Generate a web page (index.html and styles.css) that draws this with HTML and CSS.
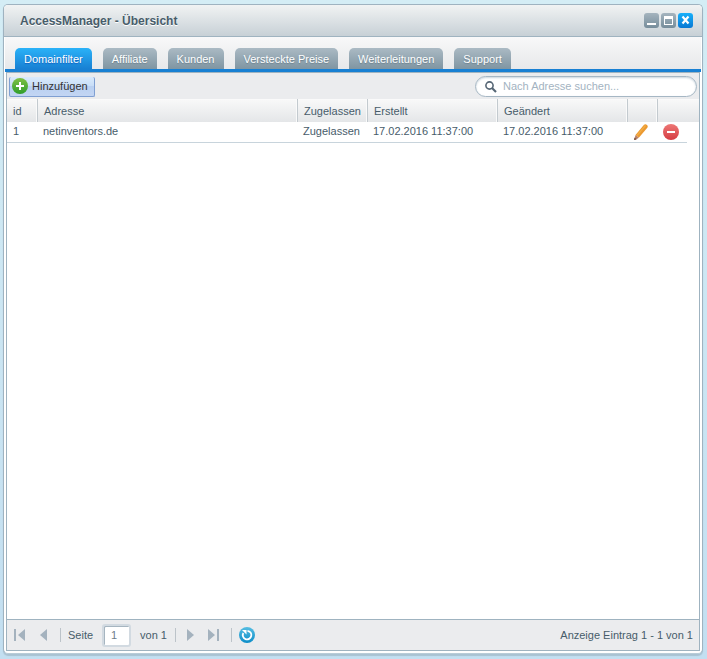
FILE: index.html
```html
<!DOCTYPE html>
<html lang="de">
<head>
<meta charset="utf-8">
<title>AccessManager - Übersicht</title>
<link rel="stylesheet" href="styles.css">
</head>
<body>
<main class="window">
  <header class="titlebar">
    <h1 class="title">AccessManager - Übersicht</h1>
    <div class="tools">
      <button class="tool" type="button" aria-label="Minimieren"><svg viewBox="0 0 15 15"><path d="M3 10h9v2H3z" fill="#fff"/></svg></button>
      <button class="tool" type="button" aria-label="Maximieren"><svg viewBox="0 0 15 15"><path fill-rule="evenodd" d="M3 3h9v9H3zM4 6v5h7V6z" fill="#fff"/></svg></button>
      <button class="tool tool-close" type="button" aria-label="Schließen"><svg viewBox="0 0 15 15"><path d="M4.500 3.500l6 7M10.500 3.500l-6 7" stroke="#fff" stroke-width="2.200"/></svg></button>
    </div>
  </header>
  <nav class="tabs">
    <button class="tab tab-active" type="button">Domainfilter</button>
    <button class="tab" type="button">Affiliate</button>
    <button class="tab" type="button">Kunden</button>
    <button class="tab" type="button">Versteckte Preise</button>
    <button class="tab" type="button">Weiterleitungen</button>
    <button class="tab" type="button">Support</button>
  </nav>
  <section class="panel">
    <div class="toolbar">
      <button class="add" type="button">
        <svg class="icon" viewBox="0 0 16 16"><defs><linearGradient id="green" x2="0" y2="1"><stop stop-color="#7fc044"/><stop offset="1" stop-color="#2f9e2c"/></linearGradient></defs><circle cx="8" cy="8" r="8" fill="url(#green)"/><path d="M7 4h2v3h3v2H9v3H7V9H4V7h3z" fill="#fff"/></svg>
        Hinzufügen
      </button>
      <label class="search">
        <svg class="lens" viewBox="0 0 12 12"><circle cx="4.500" cy="4.500" r="3.600" fill="none" stroke="#566675" stroke-width="1.600"/><path d="M7 7l4 4" stroke="#566675" stroke-width="2.200"/></svg>
        <input class="search-input" type="text" placeholder="Nach Adresse suchen..." aria-label="Nach Adresse suchen">
      </label>
    </div>
    <div class="grid">
      <table class="table">
        <colgroup><col class="c-icon"><col><col class="c-state"><col class="c-date"><col class="c-date"><col class="c-icon"><col class="c-icon"><col class="c-rest"></colgroup>
        <thead>
          <tr><th>id</th><th>Adresse</th><th>Zugelassen</th><th>Erstellt</th><th>Geändert</th><th></th><th></th><th class="rest"></th></tr>
        </thead>
        <tbody>
          <tr>
            <td>1</td><td>netinventors.de</td><td>Zugelassen</td><td>17.02.2016 11:37:00</td><td>17.02.2016 11:37:00</td>
            <td class="action"><button class="row-btn" type="button" aria-label="Bearbeiten"><svg class="icon" viewBox="0 0 16 16"><path d="M2.500 11L11 .8q1.500-1 3 .2 1.300 1.200.3 2.700L5.800 13.800z" fill="#eb9930"/><path d="M4 11.500L12.500 1.500" stroke="#f3ad45" stroke-width="1.200"/><path d="M2.500 11l3.300 2.800L2.500 16H1.200z" fill="#b98168"/><path d="M1.500 13.500L3.600 15.300 1 16z" fill="#75503f"/></svg></button></td>
            <td class="action"><button class="row-btn" type="button" aria-label="Löschen"><svg class="icon" viewBox="0 0 16 16"><defs><linearGradient id="red" x2="0" y2="1"><stop stop-color="#ee7876"/><stop offset="1" stop-color="#d53c42"/></linearGradient></defs><circle cx="8" cy="8" r="8" fill="url(#red)"/><path d="M4 7h8v2H4z" fill="#fff"/></svg></button></td>
            <td class="rest"></td>
          </tr>
        </tbody>
      </table>
    </div>
    <footer class="paging">
      <button class="page-btn" type="button" aria-label="Erste Seite"><svg class="icon" viewBox="0 0 16 16"><path d="M2 2h2v12H2zM13 2v12L6 8z" fill="#a4b2be"/></svg></button>
      <button class="page-btn" type="button" aria-label="Vorherige Seite"><svg class="icon" viewBox="0 0 16 16"><path d="M11 2v12L4 8z" fill="#a4b2be"/></svg></button>
      <span class="sep"></span>
      <label class="page-label" for="page">Seite</label>
      <input class="page-input" id="page" type="text" value="1">
      <span class="page-count">von 1</span>
      <span class="sep"></span>
      <button class="page-btn" type="button" aria-label="Nächste Seite"><svg class="icon" viewBox="0 0 16 16"><path d="M4 2v12l7-6z" fill="#a4b2be"/></svg></button>
      <button class="page-btn" type="button" aria-label="Letzte Seite"><svg class="icon" viewBox="0 0 16 16"><path d="M10 2h2v12h-2zM1 2v12l7-6z" fill="#a4b2be"/></svg></button>
      <span class="sep"></span>
      <button class="page-btn" type="button" aria-label="Aktualisieren"><svg class="icon" viewBox="0 0 16 16"><defs><linearGradient id="blue" x2="0" y2="1"><stop stop-color="#55bde2"/><stop offset="1" stop-color="#0c8dc8"/></linearGradient></defs><circle cx="8" cy="8" r="8" fill="url(#blue)"/><path d="M8.500 3.800A4.300 4.300 0 1 1 4.300 6" fill="none" stroke="#fff" stroke-width="1.800"/><path d="M3 3h4.500v4.500z" fill="#fff"/></svg></button>
      <span class="summary">Anzeige Eintrag 1 - 1 von 1</span>
    </footer>
  </section>
</main>
</body>
</html>
```
FILE: styles.css
```css
* {
  box-sizing: border-box;
}

body {
  margin: 0;
  height: 100vh;
  padding: 4px 4px 5px 3px;
  display: flex;
  background: linear-gradient(#d4edf5, #c3dff1);
  color: #475c6a;
  font: 11px/14px "Liberation Sans", Arial, sans-serif;
}

button,
input {
  font: inherit;
  color: inherit;
  margin: 0;
}

button {
  padding: 0;
  border: 0;
  background: none;
}

svg {
  display: block;
}

.icon {
  width: 16px;
  height: 16px;
  flex: none;
}

.window {
  flex: 1;
  min-width: 0;
  display: flex;
  flex-direction: column;
  padding-bottom: 2px;
  border: 1px solid #9fb3c0;
  border-bottom-color: #b9ccd8;
  border-radius: 5px;
  background: #fff;
  box-shadow: 0 2px 1px #a9c2d2;
}

.titlebar {
  display: flex;
  align-items: center;
  justify-content: space-between;
  height: 32px;
  padding: 0 9px 0 16px;
  border-bottom: 1px solid #9fb3c0;
  border-radius: 4px 4px 0 0;
  background: linear-gradient(#f1f3f3, #c7d0d6);
}

.title {
  margin: 0;
  font-size: 12px;
  line-height: 14px;
  font-weight: bold;
  text-shadow: 0 1px 0 #fff;
}

.tools {
  display: flex;
  gap: 2px;
}

.tool {
  width: 15px;
  height: 15px;
  border-radius: 3px;
  background: linear-gradient(#a5b4be, #768d9b);
}

.tool-close {
  background: linear-gradient(#17b0fa, #0878d3);
}

.tabs {
  display: flex;
  align-items: flex-end;
  gap: 11px;
  height: 35px;
  margin: 0 1px;
  padding: 0 10px;
  border-bottom: 3px solid #1880d3;
  background: linear-gradient(#f8f8f9, #e7e8ea);
}

.tab {
  height: 21px;
  padding: 0 9px;
  border-radius: 5px 5px 0 0;
  background: linear-gradient(#abbac4, #7f95a2);
  color: #fff;
  text-shadow: 0 1px 1px #6d818e;
}

.tab-active {
  background: linear-gradient(#2ab2f8, #1880d3);
  text-shadow: 0 1px 1px #1060c0;
}

.panel {
  flex: 1;
  min-height: 0;
  display: flex;
  flex-direction: column;
  margin: 0 2px;
  border: 1px solid #9fb3c0;
}

.toolbar {
  display: flex;
  align-items: center;
  justify-content: space-between;
  height: 26px;
  padding: 1px 2px 0;
  background: #ebecee;
}

.add {
  display: flex;
  align-items: center;
  gap: 4px;
  height: 20px;
  padding: 0 6px 0 2px;
  border: 1px solid #7f9fd2;
  border-top: 0;
  border-radius: 2px;
  background: linear-gradient(#d9eafc, #c9def7 45%, #b9d0f1 50%, #c3d5f3);
  color: #333;
}

.search {
  display: flex;
  align-items: center;
  gap: 6px;
  width: 222px;
  height: 21px;
  padding: 0 9px;
  border: 1px solid #a6b7c4;
  border-radius: 11px;
  background: #fff;
  box-shadow: inset 0 1px 2px #cbd6de;
}

.lens {
  width: 12px;
  height: 12px;
  flex: none;
}

.search-input {
  flex: 1;
  min-width: 0;
  height: 16px;
  padding: 0 0 2px;
  border: 0;
  outline: 0;
  background: none;
}

.search-input::placeholder {
  color: #a3b3c1;
  opacity: 1;
}

.grid {
  flex: 1;
  min-height: 0;
  background: #fff;
}

.table {
  width: 100%;
  table-layout: fixed;
  border-collapse: separate;
  border-spacing: 0;
}

.c-icon {
  width: 30px;
}

.c-state {
  width: 70px;
}

.c-date {
  width: 130px;
}

.c-rest {
  width: 12px;
}

th,
td {
  padding: 0 6px;
  text-align: left;
  font-weight: normal;
  white-space: nowrap;
}

th {
  height: 23px;
  border-left: 1px solid #c3cacf;
  background: linear-gradient(#f9f9f9, #e4e6e8);
  box-shadow: inset -1px 1px 0 #fafafa;
}

th:first-child,
th.rest {
  border-left: 0;
}

th:nth-last-child(-n+2) {
  box-shadow: inset 0 1px 0 #fafafa;
}

td {
  height: 21px;
  padding-bottom: 2px;
  border-bottom: 1px solid #c8d4dc;
}

td.rest {
  border-bottom: 0;
}

td.action {
  padding-bottom: 0;
}

.row-btn {
  display: block;
}

.paging {
  display: flex;
  align-items: center;
  height: 31px;
  padding: 0 6px 0 5px;
  border-top: 1px solid #9fb3c0;
  background: #ebecee;
}

.page-btn {
  margin-right: 8px;
}

.sep {
  width: 1px;
  height: 14px;
  margin-right: 7px;
  background: #bcc3c9;
}

.page-label {
  margin-right: 9px;
}

.page-input {
  width: 29px;
  height: 23px;
  margin-right: 9px;
  padding: 0 7px;
  border: 2px solid #d2dae1;
  border-radius: 3px;
  background: #fff;
  box-shadow: inset 1px 1px 0 #a6b5c0;
  color: #6d7d8a;
}

.page-count {
  margin-right: 8px;
}

.summary {
  margin-left: auto;
}
```
